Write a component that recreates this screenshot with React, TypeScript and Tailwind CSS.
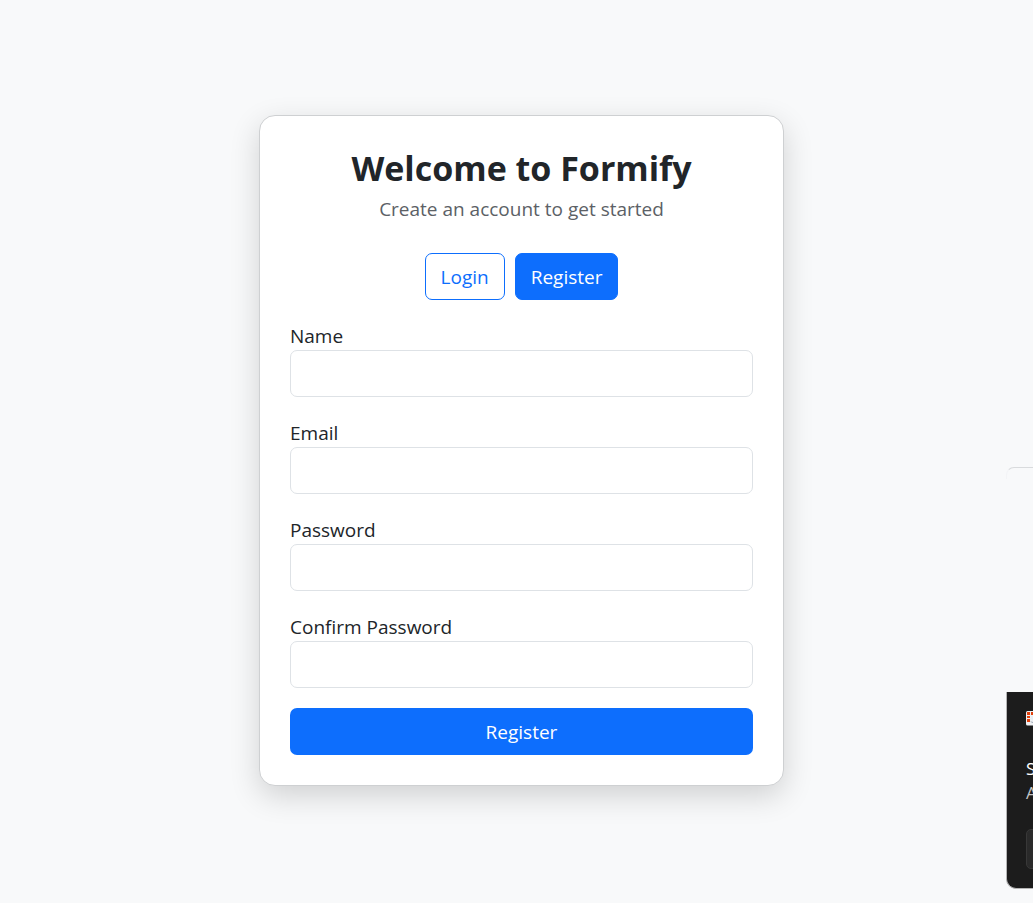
import React from "react";

const fields = [
  { id: "name", label: "Name", type: "text" },
  { id: "email", label: "Email", type: "email" },
  { id: "password", label: "Password", type: "password" },
  { id: "confirm", label: "Confirm Password", type: "password" },
];

function AppIcon() {
  return (
    <svg viewBox="0 0 16 16" className="size-4 shrink-0" aria-hidden="true">
      <rect y="1" width="16" height="14.5" rx="1.5" fill="#eef0f2" />
      <path
        d="M1 2h3v3H1zM5 2h3v3H5zM9 2h3v3H9zM1 6h3v2H1zM1 9h3v3H1z"
        fill="#e0400c"
      />
      <path d="M5 6h10v5H7L5 9z" fill="#e6edf3" />
      <path d="M4 11l3 1h8v1H6z" fill="#a9b2be" />
    </svg>
  );
}

function Notification() {
  return (
    <aside className="absolute right-0 top-[467px] w-[27px] overflow-hidden">
      <div className="h-3 w-10 rounded-tl-[8px] border-l border-t border-l-[#f3f4f6] border-t-[#d9dbdd]" />
      <div className="mt-[213px] flex h-[197px] w-[60px] flex-col rounded-bl-[10px] border-b border-l border-[#b4b4b4] bg-[#1c1c1c] pl-[19px] pt-[18px]">
        <AppIcon />
        <div className="mt-[31px] text-[17px] leading-6 text-white">S</div>
        <div className="text-[17px] leading-6 text-[#c4c4c4]">A</div>
        <button
          type="button"
          aria-label="Open"
          className="mt-6 h-10 w-12 shrink-0 rounded-[5px] border border-[#383838] bg-[#2a2a2a]"
        />
      </div>
    </aside>
  );
}

export default function App() {
  return (
    <div className="relative flex min-h-screen items-center justify-center overflow-hidden bg-[#f8f9fa] pb-0.5 pl-2.5 font-['Open_Sans','Noto_Sans',sans-serif] text-[19px] leading-[30px] text-[#212529]">
      <main className="w-full max-w-[525px] rounded-[16px] border border-[#ced0d2] bg-white px-[30px] pb-[30px] pt-[30px] shadow-[0_10px_30px_rgba(0,0,0,0.16)]">
        <header className="text-center">
          <h1 className="text-[34px] font-bold leading-[44px]">
            Welcome to Formify
          </h1>
          <p className="mt-1 text-[#5c6166]">
            Create an account to get started
          </p>
        </header>
        <nav className="mt-[29px] flex justify-center gap-2.5">
          <button
            type="button"
            className="h-[47px] rounded-[7px] border border-[#0d6efd] px-[15px] text-[#0d6efd]"
          >
            Login
          </button>
          <button
            type="button"
            className="h-[47px] rounded-[7px] border border-[#0d6efd] bg-[#0d6efd] px-[15px] text-white"
          >
            Register
          </button>
        </nav>
        <form className="mt-5" onSubmit={(e) => e.preventDefault()}>
          {fields.map((f) => (
            <div key={f.id} className="mb-5 flex flex-col">
              <label htmlFor={f.id} className="pt-0.5 leading-7">
                {f.label}
              </label>
              <input
                id={f.id}
                type={f.type}
                className="h-[47px] w-full rounded-[7px] border border-[#dee2e6] bg-white px-[15px]"
              />
            </div>
          ))}
          <button
            type="submit"
            className="h-[47px] w-full rounded-[7px] bg-[#0d6efd] text-white"
          >
            Register
          </button>
        </form>
      </main>
      <Notification />
    </div>
  );
}
